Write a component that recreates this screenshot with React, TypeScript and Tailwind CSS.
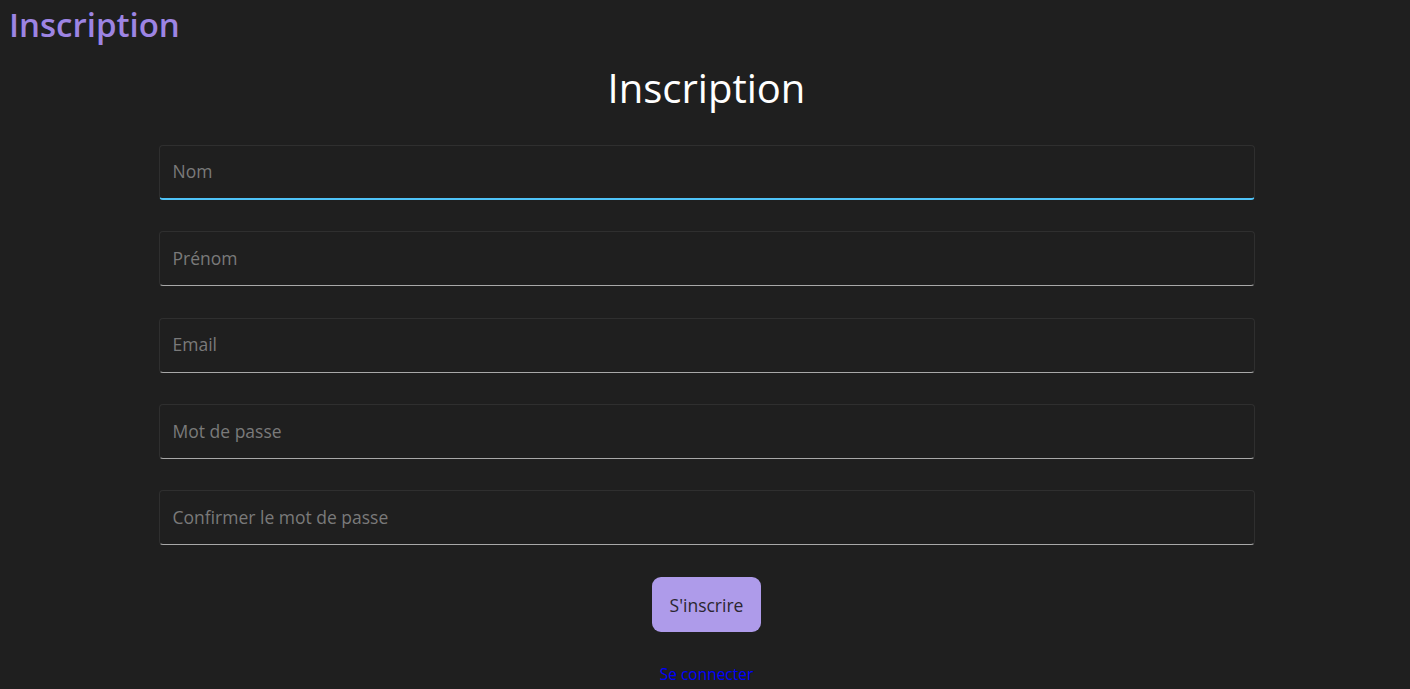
import React from "react";

const fields = ["Nom", "Prénom", "Email", "Mot de passe", "Confirmer le mot de passe"];

export default function App() {
  return (
    <div
      className="min-h-[689px] bg-[#1f1f1f] text-white"
      style={{ fontFamily: '"Open Sans", "Noto Sans", sans-serif' }}
    >
      <h1 className="pl-[9px] pt-0 text-[33px] leading-[50px] font-semibold text-[#9d84e3]">
        Inscription
      </h1>
      <div className="flex flex-col items-center pl-[3px]">
        <h2 className="mt-[10px] text-[40px] leading-[56px] font-normal text-white">Inscription</h2>
        <form className="mt-[29px] w-[1096px] flex flex-col gap-[31.25px]">
          {fields.map((f, i) => (
            <div
              key={f}
              className={
                i === 0
                  ? "h-[55px] rounded-[4px] border border-[#2f2f2f] border-b-2 border-b-[#4fc3f7] bg-[#1f1f1f] flex items-center px-[13px] pb-[1px]"
                  : "h-[55px] rounded-[4px] border border-[#2f2f2f] border-b-[#a8a8a8] bg-[#1f1f1f] flex items-center px-[13px] pb-[1px]"
              }
            >
              <span className="text-[17.5px] text-[#7a7a7a]">{f}</span>
            </div>
          ))}
          <div className="flex justify-center mt-[1px]">
            <button
              type="button"
              className="w-[109px] h-[55px] rounded-[9px] bg-[#ae9bea] text-[17.5px] text-[#2b2630]"
            >
              S'inscrire
            </button>
          </div>
        </form>
        <a href="#" className="mt-[31px] text-[15.5px] text-[#0000ff]">Se connecter</a>
      </div>
    </div>
  );
}
